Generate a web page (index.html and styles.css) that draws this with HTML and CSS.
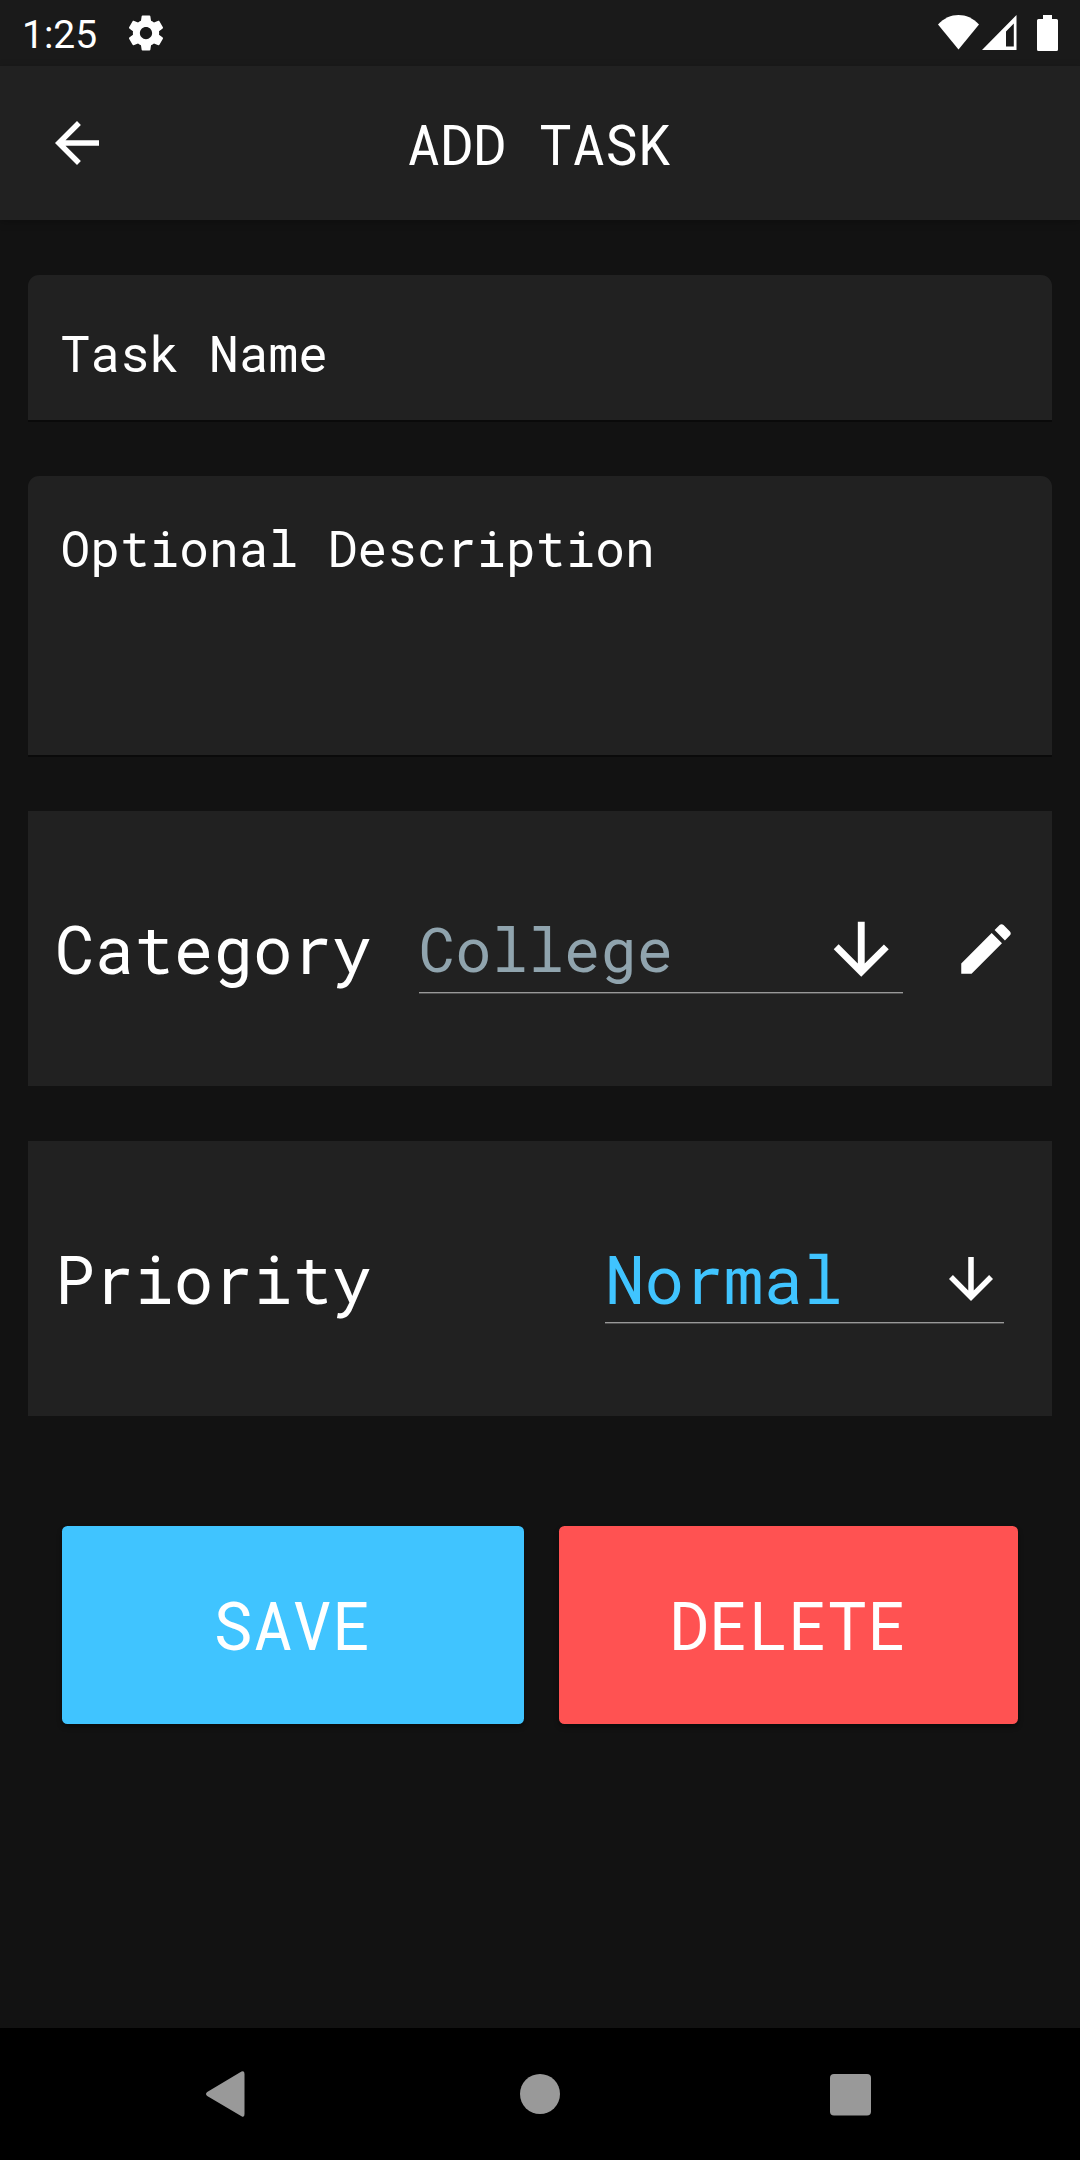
FILE: index.html
```html
<!DOCTYPE html>
<html lang="en">
<head>
<meta charset="utf-8">
<title>Add Task</title>
<link rel="stylesheet" href="styles.css">
</head>
<body>
<div class="screen">
  <div class="status">
    <span class="clock">1:25</span>
    <svg class="gear" viewBox="0 0 24 24"><path d="M19.43 12.98c.04-.32.07-.64.07-.98s-.03-.66-.07-.98l2.11-1.65c.19-.15.24-.42.12-.64l-2-3.46c-.12-.22-.39-.3-.61-.22l-2.49 1c-.52-.4-1.08-.73-1.69-.98l-.38-2.65C14.46 2.18 14.25 2 14 2h-4c-.25 0-.46.18-.49.42l-.38 2.65c-.61.25-1.17.59-1.69.98l-2.49-1c-.23-.09-.49 0-.61.22l-2 3.46c-.13.22-.07.49.12.64l2.11 1.65c-.04.32-.07.65-.07.98s.03.66.07.98l-2.11 1.65c-.19.15-.24.42-.12.64l2 3.46c.12.22.39.3.61.22l2.49-1c.52.4 1.08.73 1.69.98l.38 2.65c.03.24.24.42.49.42h4c.25 0 .46-.18.49-.42l.38-2.65c.61-.25 1.17-.59 1.69-.98l2.49 1c.23.09.49 0 .61-.22l2-3.46c.12-.22.07-.49-.12-.64l-2.11-1.65zM12 15.500c-1.930 0-3.500-1.570-3.500-3.500s1.570-3.500 3.500-3.500 3.500 1.570 3.500 3.500-1.570 3.500-3.500 3.500z"/></svg>
    <svg class="wifi" viewBox="0 0 41 35"><path d="M0 9.500C6 3 13 0 20.500 0S35 3 41 9.500L20.500 34.500z"/></svg>
    <svg class="signal" viewBox="0 0 35 35"><path fill-rule="evenodd" d="M34.500 0v35H0zM31.800 8.500L24 16.500V31.500h7.800z"/></svg>
    <svg class="battery" viewBox="0 0 21 36"><path d="M6 0h9v4h4.500q1.500 0 1.500 1.500v29q0 1.500-1.500 1.500h-18Q0 36 0 34.500v-29Q0 4 1.500 4H6z"/></svg>
  </div>

  <header class="appbar">
    <svg class="icon" viewBox="0 0 24 24"><path d="M20 11H7.830l5.590-5.590L12 4l-8 8 8 8 1.410-1.410L7.830 13H20v-2z"/></svg>
    <h1 class="title">ADD TASK</h1>
  </header>

  <main class="form">
    <div class="field name">Task Name</div>
    <div class="field description">Optional Description</div>

    <div class="card">
      <span class="label">Category</span>
      <div class="select category">
        <span class="value">College</span>
        <svg class="icon large" viewBox="0 0 24 24"><path d="M20 12l-1.410-1.410L13 16.170V4h-2v12.170l-5.580-5.590L4 12l8 8 8-8z"/></svg>
      </div>
      <svg class="icon" viewBox="0 0 24 24"><path d="M3 17.250V21h3.750L17.810 9.940l-3.750-3.750L3 17.250zM20.710 7.040c.39-.39.39-1.020 0-1.410l-2.340-2.340c-.39-.39-1.020-.39-1.410 0l-1.830 1.830 3.750 3.750 1.830-1.830z"/></svg>
    </div>

    <div class="card">
      <span class="label">Priority</span>
      <div class="select priority">
        <span class="value">Normal</span>
        <svg class="icon" viewBox="0 0 24 24"><path d="M20 12l-1.410-1.410L13 16.170V4h-2v12.170l-5.580-5.590L4 12l8 8 8-8z"/></svg>
      </div>
    </div>

    <div class="actions">
      <button class="button save">SAVE</button>
      <button class="button delete">DELETE</button>
    </div>
  </main>

  <nav class="navbar">
    <svg class="nav-back" viewBox="0 0 39 46"><path d="M35.500.6Q38.500-1 38.500 3v40q0 4-3 2.200L1.200 25q-2.400-2 0-4z"/></svg>
    <svg class="nav-home" viewBox="0 0 40 40"><circle cx="20" cy="20" r="20"/></svg>
    <svg class="nav-recent" viewBox="0 0 41 42"><rect width="41" height="41.500" rx="4"/></svg>
  </nav>
</div>
</body>
</html>
```
FILE: styles.css
```css
* {
  box-sizing: border-box;
}

body {
  margin: 0;
  background: #121212;
  color: #fff;
  font-family: "Roboto Mono", "DejaVu Sans Mono", monospace;
}

svg {
  display: block;
  flex: none;
  fill: #fff;
}

.screen {
  display: flex;
  flex-direction: column;
  width: 1080px;
  height: 2160px;
}

.status {
  display: flex;
  align-items: flex-start;
  height: 66px;
  padding: 15px 22px 0;
  background: #1a1a1a;
}

.clock {
  width: 103px;
  margin-top: -3px;
  font: 39px/46px Roboto, sans-serif;
}

.gear {
  width: 42px;
  height: 42px;
  margin-top: -3px;
}

.wifi {
  width: 41px;
  height: 35px;
  margin-left: auto;
}

.signal {
  width: 35px;
  height: 35px;
  margin-left: 3px;
}

.battery {
  width: 21px;
  height: 36px;
  margin-left: 20px;
}

.appbar {
  display: grid;
  grid-template-columns: 66px 1fr 66px;
  align-items: center;
  height: 154px;
  padding: 0 44px;
  background: #212121;
  box-shadow: 0 2px 8px rgba(0, 0, 0, 0.25);
}

.icon {
  width: 66px;
  height: 66px;
}

.icon.large {
  width: 82.5px;
  height: 82.5px;
}

.title {
  margin: 0 2px 0 0;
  font-size: 55px;
  font-weight: 400;
  text-align: center;
}

.form {
  flex: 1;
  padding: 55px 28px 0;
}

.field {
  padding: 0 32.5px;
  background: #212121;
  border-bottom: 2px solid #0a0a0a;
  border-radius: 11px 11px 0 0;
  font-size: 49.5px;
  line-height: 60px;
}

.name {
  height: 147px;
  margin-bottom: 54px;
  padding-top: 48px;
}

.description {
  height: 281px;
  margin-bottom: 54px;
  padding-top: 42px;
}

.card {
  display: flex;
  align-items: center;
  height: 275px;
  margin-bottom: 55px;
  padding: 0 33px 0 27px;
  background: #212121;
}

.label,
.value {
  font-size: 66px;
  line-height: 78px;
}

.select {
  display: flex;
  align-items: center;
  justify-content: space-between;
  height: 89px;
  padding-top: 2px;
  border-bottom: 1px solid #999;
  box-shadow: 0 1px #4f4f4f;
}

.category {
  width: 484px;
  margin: 0 0 0 47px;
}

.category + .icon {
  margin-left: auto;
}

.category .value {
  color: #90a4ae;
  font-size: 60.5px;
}

.priority {
  width: 399px;
  margin-left: auto;
  margin-right: 15px;
  padding-right: 0.5px;
}

.priority .value {
  color: #40c4ff;
}

.actions {
  display: flex;
  gap: 35px;
  padding: 55px 34px 0;
}

.button {
  height: 198px;
  padding: 0 1px 2px 0;
  border: 0;
  border-radius: 5.5px;
  color: #fff;
  font: inherit;
  font-size: 66px;
  box-shadow: 0 3px 5px rgba(0, 0, 0, 0.4);
}

.save {
  width: 462px;
  background: #40c4ff;
}

.delete {
  width: 459px;
  background: #ff5252;
}

.navbar {
  display: flex;
  align-items: center;
  height: 132px;
  padding: 0 0 0 206px;
  background: #000;
}

.navbar svg {
  fill: #999;
}

.nav-back {
  width: 39px;
  height: 46px;
}

.nav-home {
  width: 40px;
  height: 40px;
  margin: 0 270px 0 275px;
}

.nav-recent {
  width: 41px;
  height: 42px;
  margin-top: 1px;
}
```
